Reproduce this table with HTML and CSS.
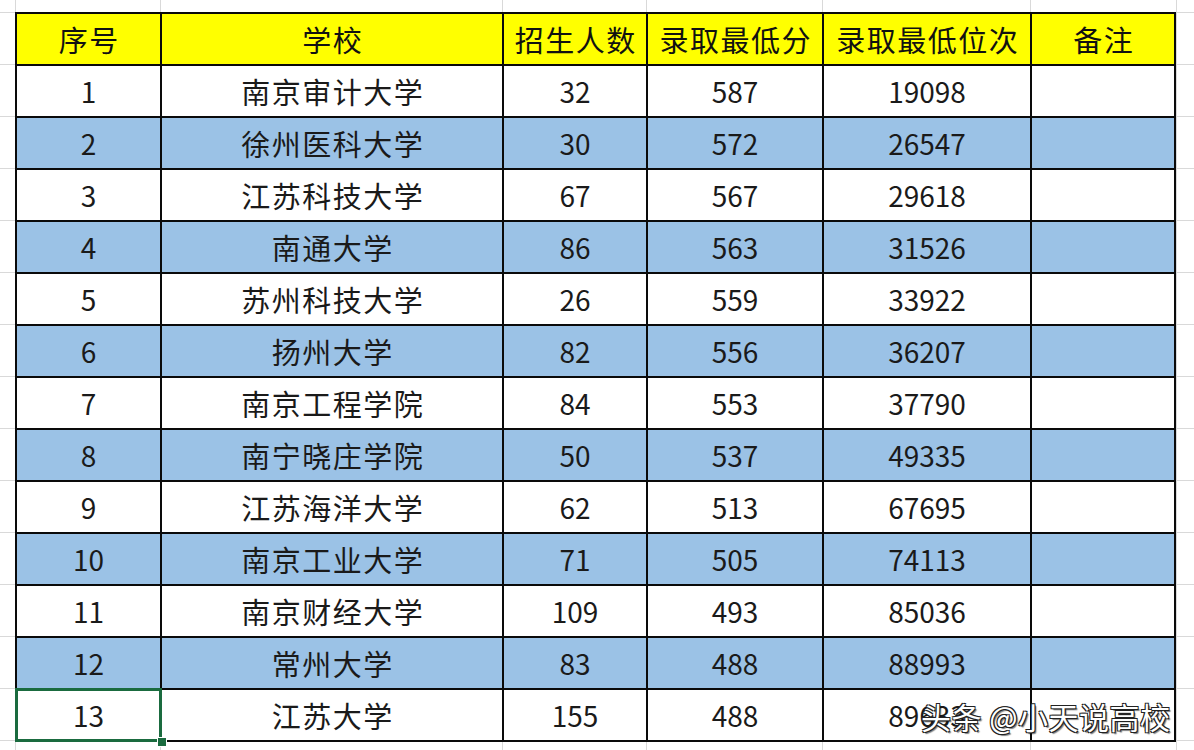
FILE: index.html
```html
<!DOCTYPE html>
<html lang="zh-CN">
<head>
<meta charset="utf-8">
<title>录取分数</title>
<link rel="stylesheet" href="styles.css">
</head>
<body>
<div class="sheet">
  <div class="table">
    <div class="cell head cn">序号</div><div class="cell head cn">学校</div><div class="cell head cn">招生人数</div><div class="cell head cn">录取最低分</div><div class="cell head cn">录取最低位次</div><div class="cell head cn">备注</div>

    <div class="cell">1</div><div class="cell cn">南京审计大学</div><div class="cell">32</div><div class="cell">587</div><div class="cell">19098</div><div class="cell"></div>
    <div class="cell blue">2</div><div class="cell blue cn">徐州医科大学</div><div class="cell blue">30</div><div class="cell blue">572</div><div class="cell blue">26547</div><div class="cell blue"></div>
    <div class="cell">3</div><div class="cell cn">江苏科技大学</div><div class="cell">67</div><div class="cell">567</div><div class="cell">29618</div><div class="cell"></div>
    <div class="cell blue">4</div><div class="cell blue cn">南通大学</div><div class="cell blue">86</div><div class="cell blue">563</div><div class="cell blue">31526</div><div class="cell blue"></div>
    <div class="cell">5</div><div class="cell cn">苏州科技大学</div><div class="cell">26</div><div class="cell">559</div><div class="cell">33922</div><div class="cell"></div>
    <div class="cell blue">6</div><div class="cell blue cn">扬州大学</div><div class="cell blue">82</div><div class="cell blue">556</div><div class="cell blue">36207</div><div class="cell blue"></div>
    <div class="cell">7</div><div class="cell cn">南京工程学院</div><div class="cell">84</div><div class="cell">553</div><div class="cell">37790</div><div class="cell"></div>
    <div class="cell blue">8</div><div class="cell blue cn">南宁晓庄学院</div><div class="cell blue">50</div><div class="cell blue">537</div><div class="cell blue">49335</div><div class="cell blue"></div>
    <div class="cell">9</div><div class="cell cn">江苏海洋大学</div><div class="cell">62</div><div class="cell">513</div><div class="cell">67695</div><div class="cell"></div>
    <div class="cell blue">10</div><div class="cell blue cn">南京工业大学</div><div class="cell blue">71</div><div class="cell blue">505</div><div class="cell blue">74113</div><div class="cell blue"></div>
    <div class="cell">11</div><div class="cell cn">南京财经大学</div><div class="cell">109</div><div class="cell">493</div><div class="cell">85036</div><div class="cell"></div>
    <div class="cell blue">12</div><div class="cell blue cn">常州大学</div><div class="cell blue">83</div><div class="cell blue">488</div><div class="cell blue">88993</div><div class="cell blue"></div>
    <div class="cell selected">13</div><div class="cell cn">江苏大学</div><div class="cell">155</div><div class="cell">488</div><div class="cell">89<span class="hidden-digits">633</span></div><div class="cell"></div>
  </div>
  <div class="watermark">头条 @小天说高校</div>
</div>
</body>
</html>
```

FILE: styles.css
```css
html, body {
  margin: 0;
  padding: 0;
}

body {
  width: 1194px;
  height: 750px;
  overflow: hidden;
  background-color: #ffffff;
  font-family: "Noto Sans CJK SC", "Noto Sans", sans-serif;
}

.sheet {
  position: relative;
  width: 1194px;
  height: 750px;
  padding: 12px 0 0 15px;
  box-sizing: border-box;
  background-image:
    linear-gradient(to right, transparent 15px, #d9d9d9 15px, #d9d9d9 16px, transparent 16px),
    linear-gradient(to right, transparent 160px, #d9d9d9 160px, #d9d9d9 161px, transparent 161px),
    linear-gradient(to right, transparent 502px, #d9d9d9 502px, #d9d9d9 503px, transparent 503px),
    linear-gradient(to right, transparent 646px, #d9d9d9 646px, #d9d9d9 647px, transparent 647px),
    linear-gradient(to right, transparent 822px, #d9d9d9 822px, #d9d9d9 823px, transparent 823px),
    linear-gradient(to right, transparent 1030px, #d9d9d9 1030px, #d9d9d9 1031px, transparent 1031px),
    linear-gradient(to right, transparent 1176px, #d9d9d9 1176px, #d9d9d9 1177px, transparent 1177px),
    repeating-linear-gradient(to bottom, #d9d9d9 0, #d9d9d9 1px, transparent 1px, transparent 52px);
  background-position: 0 0, 0 0, 0 0, 0 0, 0 0, 0 0, 0 0, 0 12px;
}

.table {
  display: grid;
  grid-template-columns: 143px 340px 142px 174px 206px 142px;
  grid-auto-rows: 50px;
  gap: 2px;
  padding: 2px;
  width: max-content;
  background: #0a0a0a;
}

.cell {
  background: #ffffff;
  display: flex;
  align-items: center;
  justify-content: center;
  font-size: 28px;
  color: #1a1a1a;
  line-height: 1;
  white-space: nowrap;
}

.cell.cn {
  font-size: 29px;
  letter-spacing: 1.5px;
  padding-left: 1.5px;
}

.cell.head {
  background: #ffff00;
  color: #111111;
}

.cell.blue {
  background: #9bc2e6;
}

.cell.selected {
  position: relative;
}

.cell.selected::before {
  content: "";
  position: absolute;
  left: -2px;
  top: -2px;
  right: -2px;
  bottom: -2px;
  border: 3px solid #1a6b3f;
  pointer-events: none;
}

.cell.selected::after {
  content: "";
  position: absolute;
  right: -7px;
  bottom: -7px;
  width: 8px;
  height: 8px;
  background: #1a6b3f;
  border: 1px solid #ffffff;
}

.hidden-digits {
  color: #1a1a1a;
}

.watermark {
  position: absolute;
  left: 921px;
  top: 697px;
  font-family: "Noto Sans CJK SC", "Noto Sans", sans-serif;
  font-size: 30px;
  line-height: 38px;
  color: #ffffff;
  white-space: nowrap;
  letter-spacing: 0.5px;
  text-shadow:
    1px 1px 0 #222,
    -1px -1px 0 #222,
    1px -1px 0 #222,
    -1px 1px 0 #222,
    2px 2px 1px rgba(0,0,0,0.5);
}
```
